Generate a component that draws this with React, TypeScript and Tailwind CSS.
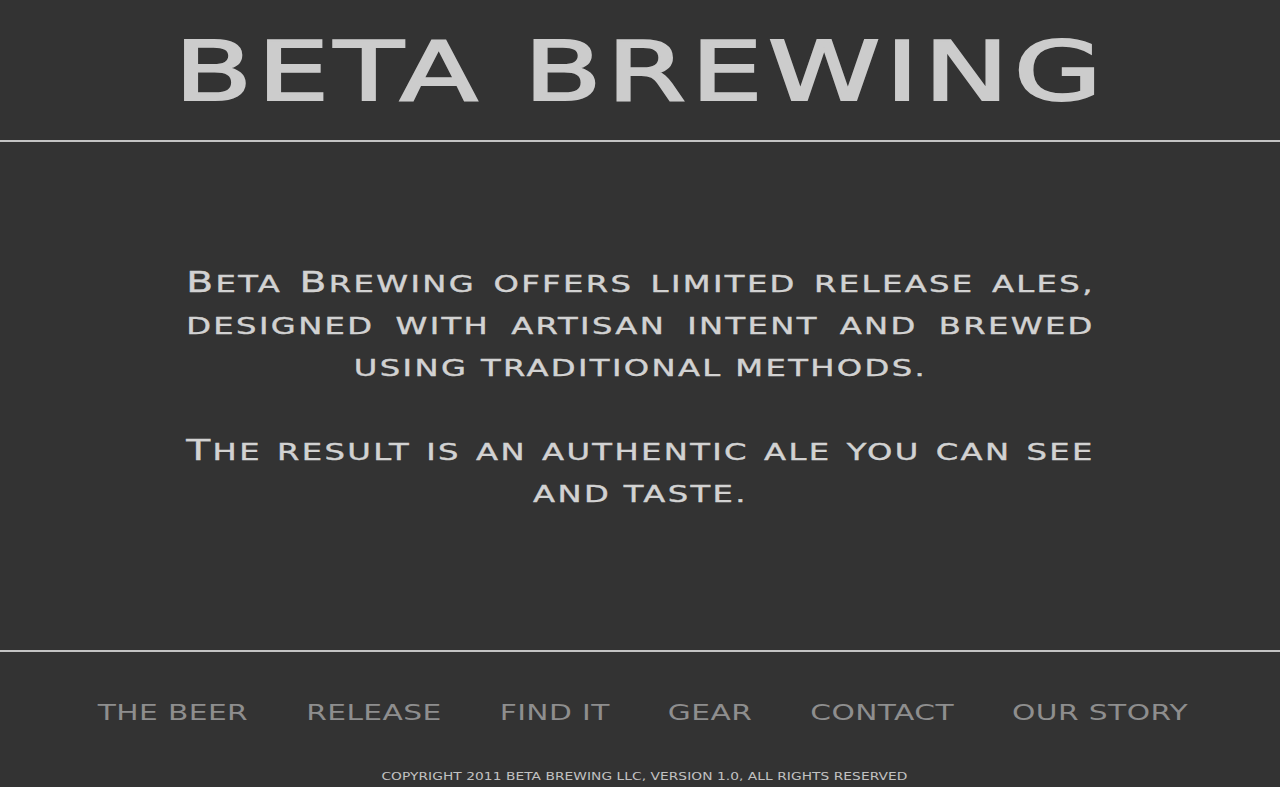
import React from 'react';

const font = "font-['DejaVu_Sans',sans-serif]";

const navItems = ['THE BEER', 'RELEASE', 'FIND IT', 'GEAR', 'CONTACT', 'OUR STORY'];

// justified line: spreads words across the full column
const Line = ({ children, last = false }: { children: React.ReactNode; last?: boolean }) => (
  <div className={last ? 'text-center' : 'text-justify [text-align-last:justify]'}>{children}</div>
);

const Cap = ({ children }: { children: React.ReactNode }) => (
  <span className="text-[28px] leading-none">{children}</span>
);

const Rule = () => <div className="h-[2px] w-full bg-[#c4c4c4]" />;

export default function App() {
  return (
    <div className={`min-h-[787px] w-full bg-[#333333] ${font} overflow-hidden`}>
      <header className="pt-[31px] pb-[27px] pl-[2px] text-center">
        <h1 className="inline-block scale-x-[1.39] whitespace-nowrap text-[82px] leading-[82px] font-normal tracking-[3.5px] text-[#cccccc] [-webkit-text-stroke:2px_#cccccc]">
          BETA BREWING
        </h1>
      </header>
      <Rule />

      <main className="h-[508px] pt-[121px]">
        <div className="mx-auto w-[649px] scale-x-[1.4] text-[23px] leading-[42px] tracking-[1.7px] text-[#d2d2d2] [-webkit-text-stroke:0.4px_#d2d2d2]">
          <Line><Cap>B</Cap>ETA <Cap>B</Cap>REWING OFFERS LIMITED RELEASE ALES,</Line>
          <Line>DESIGNED WITH ARTISAN INTENT AND BREWED</Line>
          <Line last>USING TRADITIONAL METHODS.</Line>
          <div className="h-[42px]" />
          <Line><Cap>T</Cap>HE RESULT IS AN AUTHENTIC ALE YOU CAN SEE</Line>
          <Line last>AND TASTE.</Line>
        </div>
      </main>
      <Rule />

      <footer className="pt-[50px] text-center">
        <nav className="ml-[6px] inline-flex scale-x-[1.35] gap-[43px] text-[22px] leading-[22px] tracking-[0.3px] text-[#8e8e8e]">
          {navItems.map((item) => (
            <a key={item} href="#" className="whitespace-nowrap">
              {item}
            </a>
          ))}
        </nav>
        <div className="pl-[8px]">
          <p className="mt-[44px] inline-block scale-x-[1.25] whitespace-nowrap text-[11px] leading-[11px] tracking-[0.05px] text-[#c2c2c2]">
            COPYRIGHT 2011 BETA BREWING LLC, VERSION 1.0, ALL RIGHTS RESERVED
          </p>
        </div>
      </footer>
    </div>
  );
}
